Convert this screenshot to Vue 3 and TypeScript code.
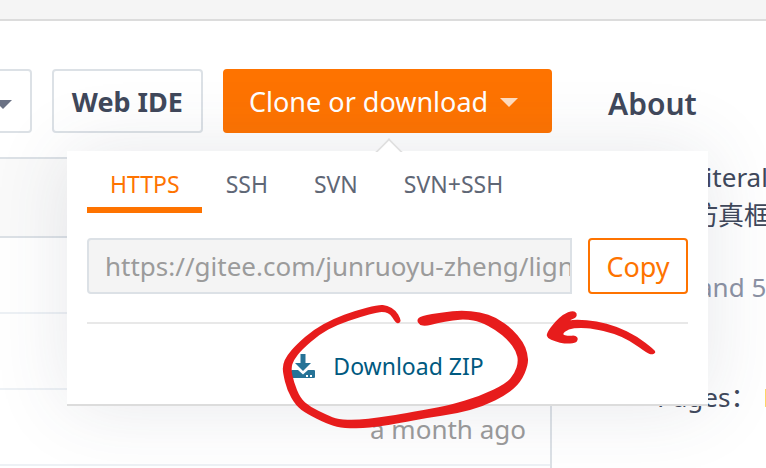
<script setup lang="ts">
import { ref } from 'vue'

const protocols = ['HTTPS', 'SSH', 'SVN', 'SVN+SSH']
const active = ref('HTTPS')
const url = ref('https://gitee.com/junruoyu-zheng/lignt')
const commits = ['', '', 'a month ago', '']

type Point = [number, number]

// Closed outline running smoothly through the midpoints of its vertices.
function smooth(points: Point[]): string {
  const mid = (a: Point, b: Point) => `${(a[0] + b[0]) / 2} ${(a[1] + b[1]) / 2}`
  const n = points.length
  let d = `M${mid(points[n - 1], points[0])}`
  points.forEach((p, i) => {
    d += `Q${p[0]} ${p[1]} ${mid(p, points[(i + 1) % n])}`
  })
  return d + 'Z'
}

const loop = smooth([
  [372, 90], [380, 101], [392, 97], [391, 85], [378, 62], [352, 46], [325, 44], [255, 62], [190, 86],
  [130, 119], [80, 163], [50, 197], [38, 225], [39, 250], [51, 300], [77, 347], [110, 371], [170, 401],
  [210, 413], [270, 416], [330, 409], [390, 399], [470, 384], [560, 371], [640, 349], [710, 314],
  [752, 277], [775, 225], [773, 190], [759, 155], [726, 116], [680, 83], [630, 66], [575, 61],
  [520, 66], [452, 78], [440, 90], [448, 105], [468, 108], [500, 100], [550, 90], [590, 88],
  [630, 95], [679, 121], [714, 150], [739, 185], [745, 215], [734, 250], [709, 280], [630, 318],
  [540, 345], [470, 358], [390, 373], [330, 382], [260, 390], [205, 388], [170, 375], [120, 350],
  [91, 325], [71, 275], [63, 235], [71, 210], [96, 178], [150, 132], [200, 105], [270, 81],
  [325, 66], [346, 66], [361, 73],
])

const arrow = smooth([
  [829, 130], [855, 95], [880, 73], [908, 61], [922, 69], [918, 84], [895, 92], [920, 88], [980, 93],
  [1040, 109], [1100, 138], [1152, 178], [1158, 188], [1146, 194], [1132, 190], [1080, 152],
  [1030, 130], [970, 116], [930, 113], [895, 117], [875, 133], [895, 138], [917, 136], [926, 148],
  [916, 160], [885, 161], [855, 155], [832, 144],
])
</script>

<template>
  <div class="page">
    <header class="topbar"></header>
    <div class="columns">
      <main class="main">
        <div class="toolbar">
          <button class="btn more" type="button" aria-label="More"><i class="caret"></i></button>
          <button class="btn" type="button">Web IDE</button>
          <div class="clone">
            <button class="btn primary" type="button">Clone or download <i class="caret"></i></button>
            <section class="popup">
              <i class="pointer"></i>
              <nav class="tabs">
                <button
                  v-for="p in protocols"
                  :key="p"
                  type="button"
                  class="tab"
                  :class="{ active: p === active }"
                  @click="active = p"
                >{{ p }}</button>
              </nav>
              <div class="address">
                <input v-model="url" type="text" readonly aria-label="Repository address" />
                <button class="copy" type="button">Copy</button>
              </div>
              <a class="download" href="#download">
                <svg viewBox="0 0 24 24" aria-hidden="true">
                  <path d="M9.500 0h5v9H20l-8 8-8-8h5.500z" />
                  <path d="M1 16h6l5 4.500 5-4.500H23q1 0 1 1v6q0 1-1 1H1q-1 0-1-1v-6q0-1 1-1z" />
                  <path class="dots" d="M15 21h2v2h-2zM19 21h2v2h-2z" />
                </svg>
                <span>Download ZIP</span>
              </a>
              <svg class="marks" viewBox="0 0 1170 450" aria-hidden="true">
                <path :d="loop" />
                <path :d="arrow" />
              </svg>
            </section>
          </div>
        </div>
        <table class="files">
          <thead>
            <tr><th></th></tr>
          </thead>
          <tbody>
            <tr v-for="(c, i) in commits" :key="i"><td>{{ c }}</td></tr>
          </tbody>
        </table>
      </main>
      <aside class="about">
        <h2>About</h2>
        <p class="summary">Literal<br />仿真框</p>
        <p class="stats">and 5</p>
        <p class="pages">Pages： <a href="#pages">L</a></p>
      </aside>
    </div>
  </div>
</template>

<style>
body {
  margin: 0;
  background: #fff;
  overflow: hidden;
}
</style>

<style scoped>
* {
  box-sizing: border-box;
}
.page {
  height: 100vh;
  overflow: hidden;
  font-family: "Noto Sans", "Noto Sans CJK SC", sans-serif;
  font-size: 26px;
  line-height: 38px;
  color: #40485b;
}
button,
input {
  font: inherit;
  margin: 0;
}
.topbar {
  height: 21px;
  background: #f5f5f5;
  border-bottom: 2px solid #dcdcdc;
}
.columns {
  display: grid;
  grid-template-columns: 552px 1fr;
}
.main {
  padding-top: 48px;
}
.toolbar {
  display: flex;
  justify-content: flex-end;
  gap: 20px;
  height: 64px;
}
.btn {
  height: 64px;
  padding: 2px 18px 0;
  border: 2px solid #dce1e6;
  border-radius: 4px;
  background: #fff;
  color: #40485b;
  font-size: 27px;
  font-weight: 700;
  white-space: nowrap;
}
.caret {
  display: inline-block;
  border: 9px solid transparent;
  border-top-color: #6b7284;
  border-bottom: 0;
  vertical-align: middle;
}
.more {
  width: 80px;
  text-align: right;
}
.clone {
  position: relative;
}
.btn.primary {
  display: flex;
  align-items: center;
  gap: 12px;
  width: 329px;
  padding: 2px 24px 0;
  border-color: #fe7300;
  background: #fe7300;
  color: #fff;
  font-weight: 400;
}
.primary .caret {
  border-top-color: #ffdcbf;
}
.popup {
  position: absolute;
  z-index: 2;
  top: 82px;
  right: -156px;
  width: 641px;
  padding: 0 20px;
  background: #fff;
  border-bottom: 2px solid #dcdcdc;
  box-shadow: 0 0 72px rgba(55, 65, 90, 0.12);
}
.pointer {
  position: absolute;
  top: -9px;
  left: 312px;
  width: 20px;
  height: 20px;
  border: 2px solid #e0e0e0;
  border-right: 0;
  border-bottom: 0;
  background: #fff;
  transform: rotate(45deg);
  clip-path: polygon(0 0, 100% 0, 0 100%);
}
.tabs {
  display: flex;
  gap: 1px;
  height: 62px;
}
.tab {
  padding: 9px 22px 0 23px;
  border: 0;
  border-bottom: 6px solid transparent;
  background: none;
  color: #5f6776;
  font-size: 23px;
}
.tab.active {
  border-color: #fe7300;
  color: #fe7300;
}
.address {
  display: flex;
  gap: 16px;
  padding: 25px 0 28px;
  border-bottom: 2px solid #e8e8e8;
}
.address input {
  flex: 1;
  min-width: 0;
  height: 56px;
  padding: 0 0 0 16px;
  border: 2px solid #dce1e6;
  border-radius: 4px 0 0 4px;
  outline: 0;
  background: #f4f4f4;
  color: #9b9b9b;
}
.copy {
  width: 100px;
  height: 56px;
  padding: 2px 0 0;
  border: 2px solid #fe7300;
  border-radius: 4px;
  background: #fff;
  color: #fe7300;
  font-size: 27px;
}
.download {
  display: flex;
  align-items: center;
  justify-content: center;
  gap: 18px;
  height: 80px;
  padding-top: 4px;
  color: #005980;
  font-size: 23px;
  text-decoration: none;
}
.download svg {
  width: 24px;
  height: 24px;
  fill: #267397;
}
.download .dots {
  fill: #fff;
}
.marks {
  position: absolute;
  top: 139px;
  left: 203px;
  width: 390px;
  height: 150px;
  fill: #e71c1c;
  pointer-events: none;
}
.files {
  width: 100%;
  margin-top: 24px;
  border-collapse: separate;
  border-spacing: 0;
  border-top: 2px solid #dce1e6;
  border-right: 2px solid #dce1e6;
}
.files th {
  height: 79px;
  padding: 0;
  border-bottom: 2px solid #dce1e6;
  background: #fafafa;
}
.files td {
  height: 76px;
  padding: 4px 24px 0 0;
  border-bottom: 2px solid #edf1f5;
  color: #9b9b9b;
  text-align: right;
}
.about {
  padding: 64px 0 0 56px;
  white-space: nowrap;
}
.about h2 {
  margin: 0;
  font-size: 30px;
  font-weight: 600;
}
.about p {
  margin: 0;
}
.summary {
  padding: 35px 0 0 84px;
}
.stats {
  padding: 34px 0 0 90px;
  color: #8c92a4;
}
.pages {
  padding: 72px 0 0 49px;
}
.pages a {
  color: #fe7300;
  text-decoration: none;
}
</style>
